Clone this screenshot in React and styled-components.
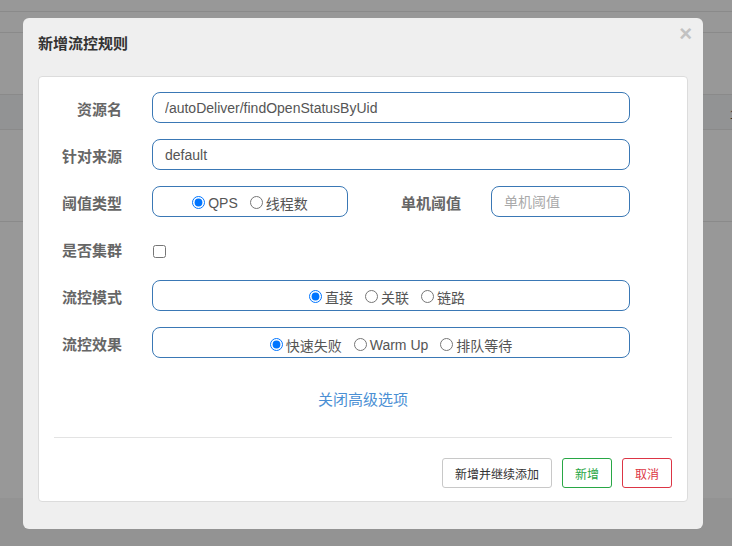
import React from "react";
import styled, { createGlobalStyle } from "styled-components";

const GlobalStyle = createGlobalStyle`
    html, body {
        margin: 0;
        padding: 0;
        height: 100%;
        background: #989898;
    }
    body {
        font-family: "Liberation Sans", "Noto Sans CJK SC", sans-serif;
        overflow: hidden;
    }
    #root {
        height: 100%;
    }
`;

const Page = styled.div`
        position: relative;
        height: 546px;
        display: flex;
        flex-direction: column;
        background: #989898;
        overflow: hidden;
    `,
    PageRow = styled.div`
        height: ${p => p.h}px;
        border-bottom: 1px solid #8a8a8a;
        background: ${p => p.band ? "#929394" : "transparent"};
        display: flex;
        align-items: center;
        justify-content: flex-end;
        font-size: 13px;
        color: #3a3028;
    `,
    PageCell = styled.span`
        margin-right: -5px;
        padding-top: 4px;
    `,
    PageFill = styled.div`
        flex: 1;
    `,
    PageFoot = styled.div`
        height: 48px;
        background: #939393;
    `;

const Dialog = styled.div`
        position: absolute;
        left: 23px;
        top: 18px;
        width: 680px;
        box-sizing: border-box;
        background: #efefef;
        border-radius: 6px;
        padding: 0 15px 27px 15px;
    `,
    DialogHead = styled.div`
        height: 58px;
        box-sizing: border-box;
        padding-top: 16px;
        font-size: 15px;
        line-height: 20px;
        font-weight: bold;
        color: #333;
    `,
    Close = styled.span`
        position: absolute;
        right: 11px;
        top: 5px;
        font-size: 22px;
        line-height: 22px;
        font-weight: bold;
        color: #c2c2c2;
        cursor: pointer;
    `,
    Card = styled.div`
        background: #fff;
        border: 1px solid #dcdcdc;
        border-radius: 4px;
        padding: 15px 15px 13px 15px;
    `,
    Form = styled.div`
        display: grid;
        grid-template-columns: 68px 1fr;
        column-gap: 30px;
        row-gap: 16px;
        padding-right: 42px;
    `,
    Label = styled.div`
        align-self: start;
        padding-top: 7px;
        line-height: 21px;
        font-size: 15px;
        font-weight: bold;
        color: #666;
        text-align: right;
        white-space: nowrap;
    `,
    Field = styled.div`
        height: 31px;
        display: flex;
        align-items: center;
    `,
    TextBox = styled.input`
        width: 100%;
        height: 31px;
        box-sizing: border-box;
        border: 1px solid #3a78b5;
        border-radius: 8px;
        padding: 0 12px;
        font-family: inherit;
        font-size: 14px;
        color: #555;
        outline: none;

        &::placeholder {
            color: #aaa;
        }
    `,
    SplitRow = styled.div`
        display: grid;
        grid-template-columns: 196px 1fr 139px;
        column-gap: 30px;
        height: 31px;
    `,
    RadioBox = styled.div`
        height: 31px;
        box-sizing: border-box;
        border: 1px solid #3a78b5;
        border-radius: 8px;
        display: flex;
        align-items: center;
        justify-content: center;
        gap: 12px;
        font-size: 14px;
        color: #555;
        padding-top: ${p => p.low ? 4 : 2}px;
        padding-right: ${p => p.shift || 0}px;
    `,
    RadioItem = styled.label`
        display: flex;
        align-items: center;
        white-space: nowrap;

        & > input {
            margin: 0 3px 0 0;
            width: 13px;
            height: 13px;
        }
    `,
    Check = styled.input`
        margin: 5px 0 0 1px;
        width: 13px;
        height: 13px;
    `,
    LinkRow = styled.div`
        margin-top: 32px;
        text-align: center;
        line-height: 20px;
    `,
    Link = styled.a`
        font-size: 15px;
        color: #4a8fd4;
        text-decoration: none;
        cursor: pointer;
    `,
    Divider = styled.hr`
        margin: 27px 0 20px 0;
        border: none;
        border-top: 1px solid #e3e3e3;
    `,
    Footer = styled.div`
        display: flex;
        justify-content: flex-end;
        gap: 10px;
    `,
    Button = styled.button`
        height: 30px;
        padding: 0 12px;
        background: #fff;
        border: 1px solid ${p => p.color};
        border-radius: 3px;
        font-family: inherit;
        font-size: 12px;
        color: ${p => p.text || p.color};
        cursor: pointer;
    `;

const Radios = ({ name, options, checked, low, shift }) => (
    <RadioBox low={low} shift={shift}>
        {options.map((o) => (
            <RadioItem key={o}>
                <input type="radio" name={name} defaultChecked={o === checked} />
                {o}
            </RadioItem>
        ))}
    </RadioBox>
);

const App = () => {
    return (
        <>
            <GlobalStyle />
            <Page>
                <PageRow h={11} />
                <PageRow h={20} />
                <PageRow h={61} />
                <PageRow h={34} band><PageCell>1</PageCell></PageRow>
                <PageRow h={91} />
                <PageFill />
                <PageFoot />

                <Dialog>
                    <DialogHead>新增流控规则</DialogHead>
                    <Close>×</Close>
                    <Card>
                        <Form>
                            <Label>资源名</Label>
                            <Field><TextBox defaultValue="/autoDeliver/findOpenStatusByUid" /></Field>

                            <Label>针对来源</Label>
                            <Field><TextBox defaultValue="default" /></Field>

                            <Label>阈值类型</Label>
                            <SplitRow>
                                <Radios name="grade" options={["QPS", "线程数"]} checked="QPS" />
                                <Label>单机阈值</Label>
                                <Field><TextBox placeholder="单机阈值" /></Field>
                            </SplitRow>

                            <Label>是否集群</Label>
                            <Field><Check type="checkbox" /></Field>

                            <Label>流控模式</Label>
                            <Radios name="strategy" options={["直接", "关联", "链路"]} checked="直接" shift={8} />

                            <Label>流控效果</Label>
                            <Radios name="behavior" options={["快速失败", "Warm Up", "排队等待"]} checked="快速失败" low />
                        </Form>

                        <LinkRow><Link>关闭高级选项</Link></LinkRow>
                        <Divider />

                        <Footer>
                            <Button color="#c8c8c8" text="#333">新增并继续添加</Button>
                            <Button color="#28a745">新增</Button>
                            <Button color="#dc3545">取消</Button>
                        </Footer>
                    </Card>
                </Dialog>
            </Page>
        </>
    );
};

export default App;
